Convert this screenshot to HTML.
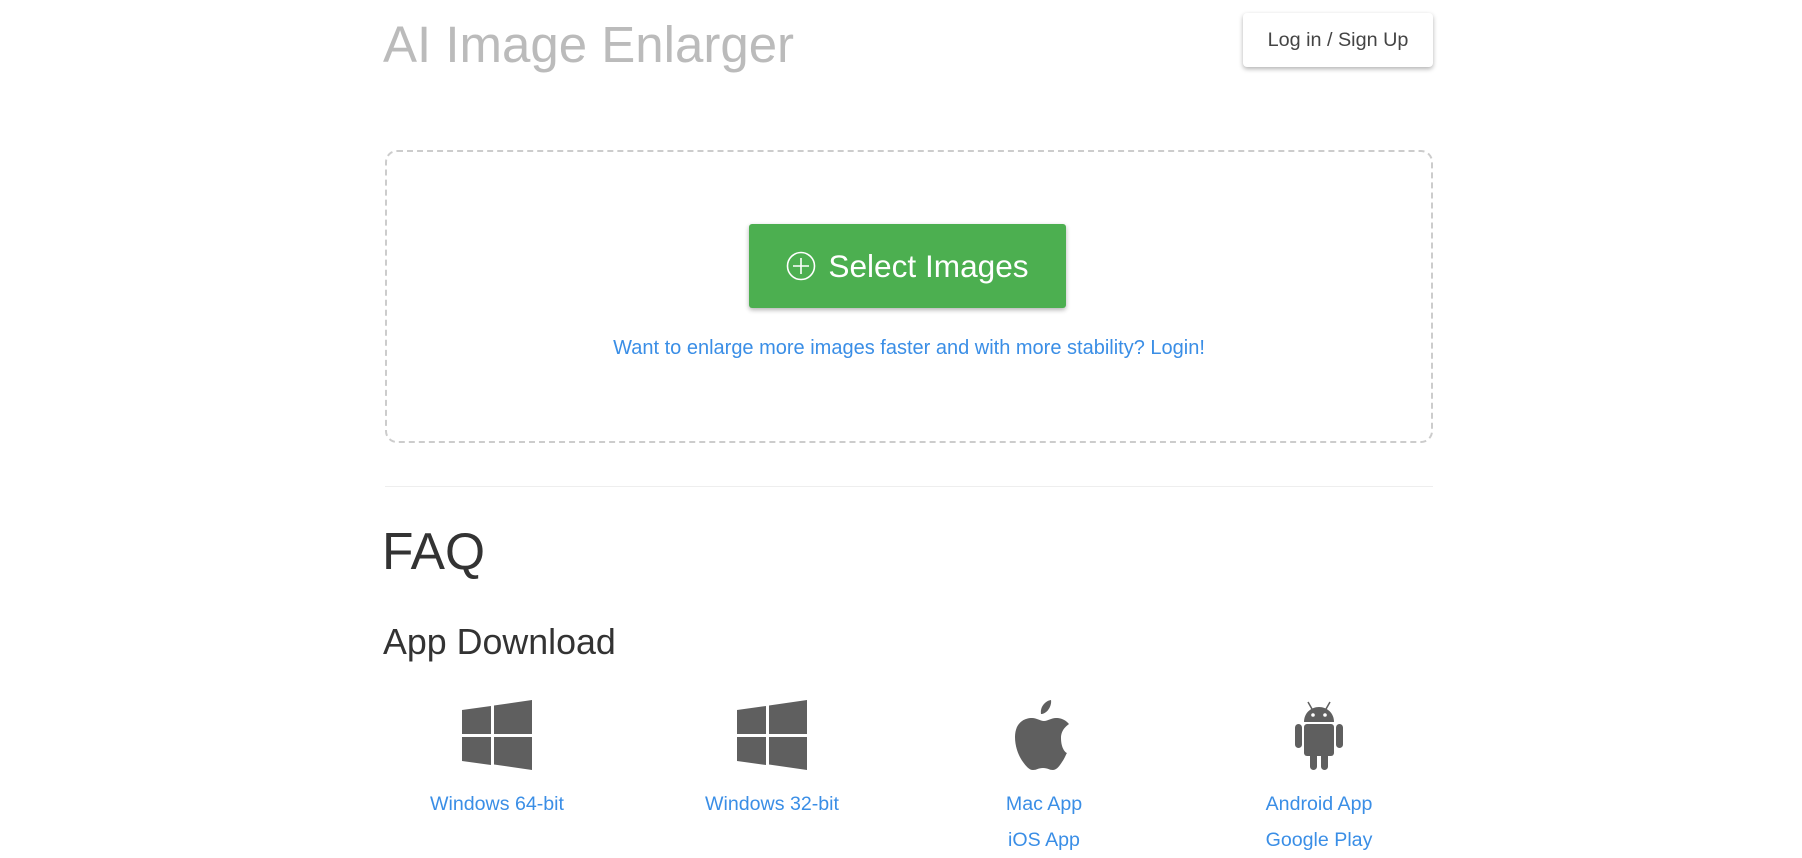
<!DOCTYPE html>
<html><head><meta charset="utf-8">
<style>
body{margin:0;width:1802px;height:858px;background:#fff;font-family:"Liberation Sans",Arial,sans-serif;position:relative;overflow:hidden}
.a{position:absolute}
.title{left:383px;top:10px;font-size:51px;color:#bbb;line-height:70px;white-space:nowrap}
.login{left:1243px;top:13px;width:190px;height:54px;border-radius:4px;box-shadow:0 2px 5px rgba(0,0,0,.3);background:#fff;color:#444;font-size:19.8px;display:flex;align-items:center;justify-content:center}
.box{left:385px;top:150px;width:1044px;height:289px;border:2px dashed #ccc;border-radius:12px}
.btn{left:749px;top:224px;width:317px;height:84px;background:#4caf50;border-radius:3px;box-shadow:0 2px 5px rgba(0,0,0,.3);color:#fff;font-size:31.6px;display:flex;align-items:center;justify-content:center}
.btn svg{margin-right:12px}
.link{left:385px;width:1048px;top:335px;text-align:center;color:#3a8ee6;font-size:20px;line-height:26px}
.hr{left:385px;top:486px;width:1048px;height:1px;background:#eee}
.faq{left:382px;top:521px;font-size:51.5px;color:#333;line-height:60px}
.app{left:383px;top:620px;font-size:35.8px;color:#333;line-height:44px}
.col{width:240px;text-align:center;color:#3a8ee6;font-size:19.6px}
.col svg{display:block;margin:0 auto}
.col div{line-height:36px}
</style></head><body>
<div class="a title">AI Image Enlarger</div>
<div class="a login">Log in / Sign Up</div>
<div class="a box"></div>
<div class="a btn"><svg width="30" height="30" viewBox="0 0 30 30"><circle cx="15" cy="15" r="13.5" fill="none" stroke="#fff" stroke-width="1.6"/><path d="M15 7v16M7 15h16" stroke="#fff" stroke-width="1.6"/></svg>Select Images</div>
<div class="a link">Want to enlarge more images faster and with more stability? Login!</div>
<div class="a hr"></div>
<div class="a faq">FAQ</div>
<div class="a app">App Download</div>

<div class="a col" style="left:377px;top:700px"><svg width="70" height="70" viewBox="0 0 70 70"><path fill="#5f5f5f" d="M0 10l29-4v28H0zM32 5.5L70 0v34H32zM0 37h29v28L0 61zM32 37h38v33l-38-5.5z"/></svg><div style="margin-top:16px">Windows 64-bit</div></div>
<div class="a col" style="left:652px;top:700px"><svg width="70" height="70" viewBox="0 0 70 70"><path fill="#5f5f5f" d="M0 10l29-4v28H0zM32 5.5L70 0v34H32zM0 37h29v28L0 61zM32 37h38v33l-38-5.5z"/></svg><div style="margin-top:16px">Windows 32-bit</div></div>
<div class="a col" style="left:924px;top:700px"><svg width="70" height="70" viewBox="0 0 70 70"><path fill="#5f5f5f" d="M42 0c1 6-4 14-10 14-1-7 4-13 10-14zM52 38c0-9 7-13 8-14-5-6-11-6-13-6-5 0-8 3-12 3s-7-3-12-3C14 18 6 24 6 37c0 9 3 18 8 25 3 4 6 8 10 8s5-2 10-2 6 2 10 2 7-5 9-8c3-4 4-8 5-9-1 0-6-4-6-15z"/></svg><div style="margin-top:16px">Mac App</div><div>iOS App</div></div>
<div class="a col" style="left:1199px;top:700px"><svg width="70" height="70" viewBox="0 0 70 70"><g fill="#5f5f5f"><path d="M20 22c0-9 7-15 15-15s15 6 15 15z"/><path d="M24 2l4 7M46 2l-4 7" stroke="#5f5f5f" stroke-width="1.5"/><rect x="20" y="24" width="30" height="32" rx="3"/><rect x="11" y="24" width="7" height="24" rx="3.5"/><rect x="52" y="24" width="7" height="24" rx="3.5"/><rect x="26" y="50" width="7" height="20" rx="3.5"/><rect x="37" y="50" width="7" height="20" rx="3.5"/></g><circle cx="29" cy="15" r="1.8" fill="#fff"/><circle cx="41" cy="15" r="1.8" fill="#fff"/></svg><div style="margin-top:16px">Android App</div><div>Google Play</div></div>
</body></html>
